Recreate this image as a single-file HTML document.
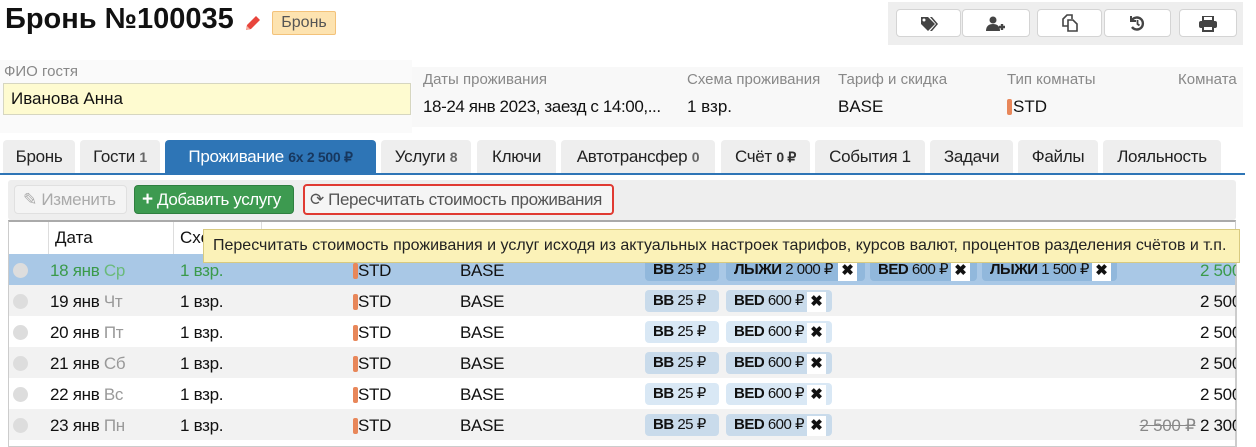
<!DOCTYPE html>
<html><head><meta charset="utf-8"><style>
*{box-sizing:border-box;margin:0;padding:0}
body{width:1256px;height:447px;overflow:hidden;background:#fff;font-family:"Liberation Sans",sans-serif;font-size:16px;letter-spacing:0;color:#111;position:relative}
.a{position:absolute;white-space:nowrap}
.btn{position:absolute;background:#fff;border:1px solid #d4d4d4;border-radius:4px;text-align:center}
.btn svg{margin-top:6px}
.lbl{color:#888;font-size:15px}
.tab{position:absolute;top:140px;height:34px;background:#eee;border-radius:4px 4px 0 0;line-height:34px;text-align:center;color:#222;font-size:17px;letter-spacing:-0.3px}
.tab b{font-size:14px;color:#666}
.row{position:absolute;left:9px;width:1226px;height:31px;line-height:33px;font-size:17px;letter-spacing:-0.3px}
.chip{position:absolute;height:22px;line-height:22px;border-radius:4px;background:#d2e2f0;font-size:15px;padding-left:8px;letter-spacing:-0.5px}
.x{position:absolute;top:2px;width:19px;height:20px;background:#fff;text-align:center;line-height:20px;font-weight:bold;font-size:15px;letter-spacing:0}
.dot{position:absolute;left:4px;top:9px;width:15px;height:15px;border-radius:50%;background:#ddd}
.bar{position:absolute;left:344px;top:9px;width:5px;height:16px;background:#e8875a;border-radius:2px}
</style></head><body>
<div class="a" style="left:5px;top:3px;font-size:29px;font-weight:bold">Бронь №100035</div>
<svg class="a" style="left:243px;top:13px" width="20" height="20" viewBox="0 0 20 20"><path d="M3 17l1-5L13 3l4 4-9 9z" fill="#e8453c"/><path d="M3 17l1-4 3 3z" fill="#f4b0a0"/></svg>
<div class="a" style="left:272px;top:11px;width:64px;height:24px;background:#fde3b0;border:1px solid #f3c27a;border-radius:2px;color:#555;font-size:16px;line-height:22px;text-align:center">Бронь</div>
<div class="a" style="left:888px;top:2px;width:355px;height:43px;background:#eee"></div>
<div class="btn" style="left:896px;top:9px;width:65px;height:28px"><svg width="18" height="16" viewBox="0 0 18 16"><path d="M1 1h7l7 7-7 7-7-7z" fill="#444"/><path d="M10 1h2l6 7-6 7h-2l6-7z" fill="#444"/><circle cx="4" cy="4" r="1.5" fill="#fff"/></svg></div>
<div class="btn" style="left:962px;top:9px;width:68px;height:28px"><svg width="20" height="16" viewBox="0 0 20 16"><circle cx="7" cy="4" r="3.5" fill="#444"/><path d="M0 15c0-5 3-7 7-7s7 2 7 7z" fill="#444"/><path d="M13 11h6M16 8v6" stroke="#444" stroke-width="2.4"/></svg></div>
<div class="btn" style="left:1037px;top:9px;width:65px;height:28px"><svg width="18" height="18" viewBox="0 0 18 18" fill="none" stroke="#444" stroke-width="1.6" style="margin-top:4px"><path d="M7 12H2V5l4-4h5v4"/><path d="M7 6h5l4 4v7H7z"/></svg></div>
<div class="btn" style="left:1104px;top:9px;width:67px;height:28px"><svg width="17" height="17" viewBox="0 0 17 17" fill="none" stroke="#444" stroke-width="2.4" style="margin-top:5px"><path d="M3 5a6 6 0 1 1 0 7"/><path d="M2 1v5h5" stroke-width="2"/><path d="M8.5 5v4l2 1.5" stroke-width="1.8"/></svg></div>
<div class="btn" style="left:1179px;top:9px;width:58px;height:28px"><svg width="18" height="16" viewBox="0 0 18 16"><rect x="4" y="0" width="10" height="5" fill="none" stroke="#444" stroke-width="2"/><rect x="0" y="5" width="18" height="7" rx="2" fill="#444"/><rect x="4" y="10" width="10" height="5" fill="#fff" stroke="#444" stroke-width="2"/></svg></div>

<div class="a" style="left:0;top:60px;width:412px;height:73px;background:#fafafa"></div>
<div class="a" style="left:412px;top:67px;width:831px;height:60px;background:#f8f8f8"></div>
<div class="a lbl" style="left:4px;top:63px">ФИО гостя</div>
<div class="a" style="left:3px;top:83px;width:408px;height:32px;background:#fefbd0;border:1px solid #d6d6c0;line-height:30px;padding-left:7px;font-size:17px">Иванова Анна</div>
<div class="a lbl" style="left:423px;top:71px">Даты проживания</div>
<div class="a" style="left:423px;top:97px;font-size:17px;letter-spacing:-0.4px">18-24 янв 2023, заезд с 14:00,...</div>
<div class="a lbl" style="left:687px;top:71px">Схема проживания</div>
<div class="a" style="left:687px;top:97px;font-size:17px">1 взр.</div>
<div class="a lbl" style="left:838px;top:71px">Тариф и скидка</div>
<div class="a" style="left:838px;top:97px;font-size:17px">BASE</div>
<div class="a lbl" style="left:1007px;top:71px">Тип комнаты</div>
<div class="a" style="left:1007px;top:99px;width:5px;height:16px;background:#e8875a;border-radius:2px"></div>
<div class="a" style="left:1013px;top:97px;font-size:17px">STD</div>
<div class="a lbl" style="left:1178px;top:71px">Комната</div>

<div class="tab" style="left:3px;width:72px">Бронь</div>
<div class="tab" style="left:80px;width:80px">Гости <b>1</b></div>
<div class="tab" style="left:165px;width:211px;background:#2e75b6;color:#fff">Проживание <b style="color:#17375e">6x 2 500 ₽</b></div>
<div class="tab" style="left:381px;width:90px">Услуги <b>8</b></div>
<div class="tab" style="left:477px;width:79px">Ключи</div>
<div class="tab" style="left:561px;width:154px">Автотрансфер <b>0</b></div>
<div class="tab" style="left:721px;width:89px">Счёт <b style="color:#333">0 ₽</b></div>
<div class="tab" style="left:815px;width:110px">События 1</div>
<div class="tab" style="left:930px;width:83px">Задачи</div>
<div class="tab" style="left:1018px;width:80px">Файлы</div>
<div class="tab" style="left:1103px;width:118px">Лояльность</div>
<div class="a" style="left:0;top:173px;width:1245px;height:2px;background:#2e75b6"></div>

<div class="a" style="left:8px;top:180px;width:1228px;height:40px;background:#eee;border-radius:3px"></div>
<div class="a" style="left:14px;top:185px;width:113px;height:29px;border:1px solid #e0e0e0;border-radius:4px;background:#f4f4f4;color:#aaa;line-height:27px;padding-left:8px;font-size:17px;letter-spacing:-0.3px">✎ Изменить</div>
<div class="a" style="left:134px;top:185px;width:160px;height:29px;border-radius:4px;background:#3d9a50;border:1px solid #2f7f40;color:#fff;line-height:27px;padding-left:7px;font-size:17px;letter-spacing:-0.4px"><b style="font-size:19px">+</b> Добавить услугу</div>
<div class="a" style="left:303px;top:184px;width:311px;height:31px;border:2px solid #e03a32;border-radius:4px;background:#f5f5f5;color:#555;line-height:27px;padding-left:5px;font-size:17px;letter-spacing:-0.4px"><span style="font-size:17px;color:#555">⟳</span> Пересчитать стоимость проживания</div>

<div class="a" style="left:8px;top:220px;width:1228px;height:227px;border:1px solid #ccc;border-top:2px solid #aaa"></div>
<div class="a" style="left:48px;top:222px;width:1px;height:32px;background:#ddd"></div>
<div class="a" style="left:173px;top:222px;width:1px;height:32px;background:#ddd"></div>
<div class="a" style="left:261px;top:222px;width:1px;height:32px;background:#ddd"></div>
<div class="a" style="left:55px;top:228px;font-size:17px">Дата</div>
<div class="a" style="left:180px;top:228px;font-size:17px">Схе</div>

<div class="row" style="top:254px;background:#a9c8e6"><div class="dot"></div><span class="a" style="left:41px;color:#3a9a4a">18 янв <span style="color:#6aba7a">Ср</span></span><span class="a" style="left:171px;color:#3a9a4a">1 взр.</span><div class="bar"></div><span class="a" style="left:349px">STD</span><span class="a" style="left:451px">BASE</span>
<div class="chip" style="left:636px;top:5px;width:74px;background:#91b8dc"><b>BB</b> 25 ₽</div>
<div class="chip" style="left:717px;top:5px;width:139px;background:#91b8dc"><b>ЛЫЖИ</b> 2 000 ₽<span class="x" style="left:112px">✖</span></div>
<div class="chip" style="left:861px;top:5px;width:107px;background:#91b8dc"><b>BED</b> 600 ₽<span class="x" style="left:81px">✖</span></div>
<div class="chip" style="left:973px;top:5px;width:135px;background:#91b8dc"><b>ЛЫЖИ</b> 1 500 ₽<span class="x" style="left:110px">✖</span></div>
<span class="a" style="right:-6px;color:#3a9a4a">2 500</span></div>

<div class="row" style="top:285px;background:#f2f2f2"><div class="dot"></div><span class="a" style="left:41px">19 янв <span style="color:#999">Чт</span></span><span class="a" style="left:171px">1 взр.</span><div class="bar"></div><span class="a" style="left:349px">STD</span><span class="a" style="left:451px">BASE</span><div class="chip" style="left:636px;top:5px;width:74px;background:#c9dbeb"><b>BB</b> 25 ₽</div><div class="chip" style="left:717px;top:5px;width:106px;background:#c9dbeb"><b>BED</b> 600 ₽<span class="x" style="left:81px">✖</span></div><span class="a" style="right:-6px">2 500</span></div>
<div class="row" style="top:316px;background:#fff"><div class="dot"></div><span class="a" style="left:41px">20 янв <span style="color:#999">Пт</span></span><span class="a" style="left:171px">1 взр.</span><div class="bar"></div><span class="a" style="left:349px">STD</span><span class="a" style="left:451px">BASE</span><div class="chip" style="left:636px;top:5px;width:74px;background:#d9e8f5"><b>BB</b> 25 ₽</div><div class="chip" style="left:717px;top:5px;width:106px;background:#d9e8f5"><b>BED</b> 600 ₽<span class="x" style="left:81px">✖</span></div><span class="a" style="right:-6px">2 500</span></div>
<div class="row" style="top:347px;background:#f2f2f2"><div class="dot"></div><span class="a" style="left:41px">21 янв <span style="color:#999">Сб</span></span><span class="a" style="left:171px">1 взр.</span><div class="bar"></div><span class="a" style="left:349px">STD</span><span class="a" style="left:451px">BASE</span><div class="chip" style="left:636px;top:5px;width:74px;background:#c9dbeb"><b>BB</b> 25 ₽</div><div class="chip" style="left:717px;top:5px;width:106px;background:#c9dbeb"><b>BED</b> 600 ₽<span class="x" style="left:81px">✖</span></div><span class="a" style="right:-6px">2 500</span></div>
<div class="row" style="top:378px;background:#fff"><div class="dot"></div><span class="a" style="left:41px">22 янв <span style="color:#999">Вс</span></span><span class="a" style="left:171px">1 взр.</span><div class="bar"></div><span class="a" style="left:349px">STD</span><span class="a" style="left:451px">BASE</span><div class="chip" style="left:636px;top:5px;width:74px;background:#d9e8f5"><b>BB</b> 25 ₽</div><div class="chip" style="left:717px;top:5px;width:106px;background:#d9e8f5"><b>BED</b> 600 ₽<span class="x" style="left:81px">✖</span></div><span class="a" style="right:-6px">2 500</span></div>
<div class="row" style="top:409px;background:#f2f2f2"><div class="dot"></div><span class="a" style="left:41px">23 янв <span style="color:#999">Пн</span></span><span class="a" style="left:171px">1 взр.</span><div class="bar"></div><span class="a" style="left:349px">STD</span><span class="a" style="left:451px">BASE</span><div class="chip" style="left:636px;top:5px;width:74px;background:#c9dbeb"><b>BB</b> 25 ₽</div><div class="chip" style="left:717px;top:5px;width:106px;background:#c9dbeb"><b>BED</b> 600 ₽<span class="x" style="left:81px">✖</span></div><span class="a" style="right:-6px"><s style="color:#888">2 500 ₽</s> 2 300</span></div>
<div class="a" style="left:1236px;top:254px;width:20px;height:193px;background:#fff;border-left:1px solid #ccc"></div>

<div class="a" style="left:203px;top:229px;width:1037px;height:34px;background:#fbf2b8;border:1px solid #d8ca80;line-height:32px;padding-left:9px;color:#222;font-size:16px;letter-spacing:0">Пересчитать стоимость проживания и услуг исходя из актуальных настроек тарифов, курсов валют, процентов разделения счётов и т.п.</div>
</body></html>
